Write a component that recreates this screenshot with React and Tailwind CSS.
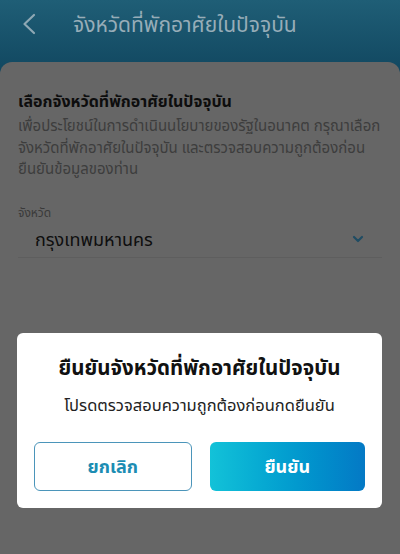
import React from 'react';

const thai = { fontFamily: '"Noto Sans", "Noto Sans Thai", "DejaVu Sans", sans-serif' };

function ConfirmDialog() {
  return (
    <div className="absolute left-[17px] right-[18px] top-[333px] h-[175px] bg-white rounded-md flex flex-col items-center">
      <h2 className="mt-[19px] text-[20.5px] font-bold text-[#111] leading-[31px]">
        ยืนยันจังหวัดที่พักอาศัยในปัจจุบัน
      </h2>
      <p className="mt-[9px] text-[16.5px] text-[#222] leading-[26px]">
        โปรดตรวจสอบความถูกต้องก่อนกดยืนยัน
      </p>
      <div className="mt-[24px] w-full px-[17px] flex gap-[18px]">
        <button className="flex-1 h-[49px] rounded-md border-[1.5px] border-[#4b95ba] text-[#1d8db3] text-[18px] font-bold">
          ยกเลิก
        </button>
        <button className="flex-1 h-[49px] rounded-md bg-gradient-to-r from-[#13c2d8] to-[#0479c5] text-white text-[18px] font-bold">
          ยืนยัน
        </button>
      </div>
    </div>
  );
}

export default function App() {
  return (
    <div className="relative w-[400px] h-[554px] overflow-hidden bg-[#134a62]" style={thai}>
      {/* Header */}
      <div className="h-[74px] -mb-[12px] bg-gradient-to-b from-[#1f5e76] to-[#114760] flex items-start pt-[12px]">
        <svg width="14" height="22" viewBox="0 0 14 22" className="ml-[22px] mt-[1px] text-[#8ea8b4]" fill="none" stroke="currentColor" strokeWidth="2.2" strokeLinecap="round" strokeLinejoin="round">
          <path d="M12 2 2.5 11l9.5 9" />
        </svg>
        <h1 className="ml-[37px] text-[21px] text-[#97adb8] leading-[24px]">จังหวัดที่พักอาศัยในปัจจุบัน</h1>
      </div>

      {/* Card */}
      <div className="relative h-[492px] bg-[#666666] rounded-t-xl px-[18px] pt-[27px]">
        <h3 className="text-[16px] font-bold text-[#0d0d0d] leading-[24px]">
          เลือกจังหวัดที่พักอาศัยในปัจจุบัน
        </h3>
        <p className="mt-[2px] text-[15px] text-[#3d3d3d] leading-[21.5px]">
          เพื่อประโยชน์ในการดำเนินนโยบายของรัฐในอนาคต กรุณาเลือกจังหวัดที่พักอาศัยในปัจจุบัน และตรวจสอบความถูกต้องก่อนยืนยันข้อมูลของท่าน
        </p>

        <div className="mt-[24px]">
          <label className="block text-[12px] text-[#3a3a3a] leading-[18px]">จังหวัด</label>
          <div className="flex items-center justify-between border-b border-[#5e5e5e] h-[36px] pl-[17px] pr-[16px]">
            <span className="text-[18px] text-[#0e0e0e] leading-[26px]">กรุงเทพมหานคร</span>
            <svg width="16" height="16" viewBox="0 0 24 24" fill="none" stroke="#1f4c63" strokeWidth="3.2" strokeLinecap="round" strokeLinejoin="round">
              <path d="m6 9 6 6 6-6" />
            </svg>
          </div>
        </div>
      </div>

      <ConfirmDialog />
    </div>
  );
}
